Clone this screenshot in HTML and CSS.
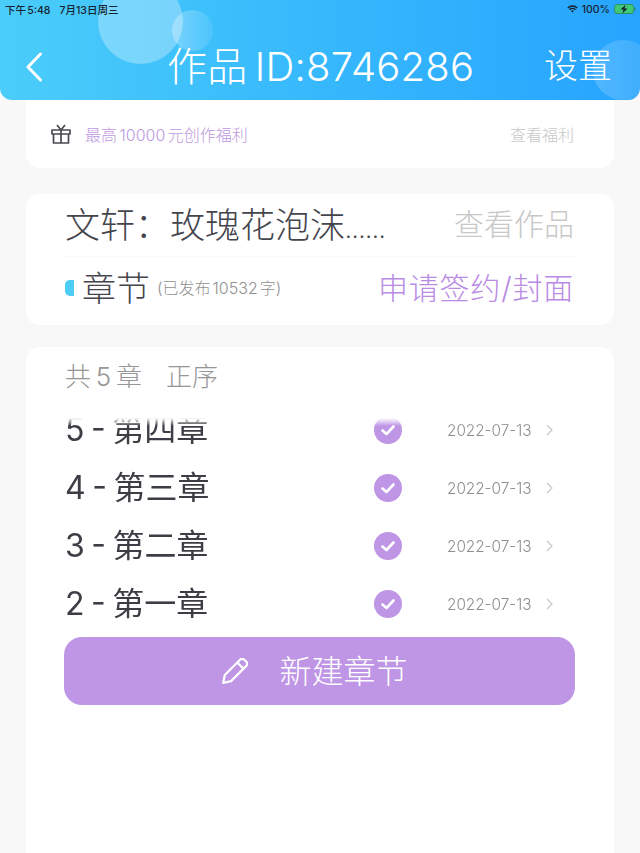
FILE: index.html
```html
<!DOCTYPE html>
<html lang="zh-CN">
  <head>
    <meta charset="UTF-8" />
    <meta name="viewport" content="width=device-width, initial-scale=1.0" />
    <title>作品</title>
    <link rel="stylesheet" href="styles.css">
  </head>
  <body>
    <header class="header">
      <div class="bubble bubble-big"></div>
      <div class="bubble bubble-small"></div>
      <div class="bubble bubble-right"></div>
      <div class="status">
        <div class="status-left"><span>下午 5:48</span><span>7月13日周三</span></div>
        <div class="status-right">
          <svg width="11" height="8" viewBox="0 0 14 10">
            <path d="M1 3.6a8.6 8.6 0 0 1 12 0M3.2 5.8a5.4 5.4 0 0 1 7.6 0" fill="none" stroke="#16222e" stroke-width="1.8"/>
            <path d="M5.2 7.6a2.6 2.6 0 0 1 3.6 0L7 9.6z" fill="#16222e"/>
          </svg>
          <span>100%</span>
          <svg width="22" height="10" viewBox="0 0 22 10">
            <rect x="0.5" y="0.5" width="19" height="9" rx="2.5" fill="#3fc878" stroke="#2f8f6a"/>
            <rect x="20.3" y="3.2" width="1.4" height="3.6" rx="0.7" fill="#2f8f6a"/>
            <path d="M11.5 0.8 6.5 5.6h3l-1 3.6 5-4.8h-3z" fill="#14212b"/>
          </svg>
        </div>
      </div>
      <div class="nav">
        <svg class="back" width="18" height="30" viewBox="0 0 18 30">
          <path d="M14.5 2 2 15l12.5 13" fill="none" stroke="#fff" stroke-width="3" stroke-linecap="round" stroke-linejoin="round"/>
        </svg>
        <div class="nav-title">作品 ID:8746286</div>
        <div class="nav-action">设置</div>
      </div>
    </header>

    <section class="card card-perk">
      <svg class="gift" width="22" height="22" viewBox="0 0 22 22">
        <path d="M2 7h18v4H2zM3.5 11v9h15v-9M11 7v13M7 2l4 5 4-5" fill="none" stroke="#4a4a52" stroke-width="1.7" stroke-linejoin="round"/>
      </svg>
      <span class="perk-text">最高 10000 元创作福利</span>
      <span class="perk-link">查看福利</span>
    </section>

    <section class="card card-work">
      <div class="work-row">
        <span class="work-title">文轩：玫瑰花泡沫<span class="dots">……</span></span>
        <span class="work-link">查看作品</span>
      </div>
      <div class="chapter-row">
        <span class="marker"></span>
        <span class="chapter-label">章节</span>
        <span class="chapter-count">(已发布 10532 字)</span>
        <span class="chapter-action">申请签约/封面</span>
      </div>
    </section>

    <section class="card card-list">
      <div class="list-head"><span class="list-total">共 5 章</span><span>正序</span></div>
      <div class="rows">
        <div class="row row-first">
          <span class="row-name">5 - 第四章</span>
          <svg class="check" width="28" height="28" viewBox="0 0 28 28"><circle cx="14" cy="14" r="14" fill="#bf95e6"/><path d="M8.5 14.5l4 3.5 7-7.5" fill="none" stroke="#fff" stroke-width="2.6" stroke-linecap="round" stroke-linejoin="round"/></svg>
          <span class="row-date">2022-07-13</span>
          <svg class="arrow" width="7" height="12" viewBox="0 0 7 12"><path d="M1 1l5 5-5 5" fill="none" stroke="#c8c8c8" stroke-width="1.2"/></svg>
        </div>
        <div class="row">
          <span class="row-name">4 - 第三章</span>
          <svg class="check" width="28" height="28" viewBox="0 0 28 28"><circle cx="14" cy="14" r="14" fill="#bf95e6"/><path d="M8.5 14.5l4 3.5 7-7.5" fill="none" stroke="#fff" stroke-width="2.6" stroke-linecap="round" stroke-linejoin="round"/></svg>
          <span class="row-date">2022-07-13</span>
          <svg class="arrow" width="7" height="12" viewBox="0 0 7 12"><path d="M1 1l5 5-5 5" fill="none" stroke="#c8c8c8" stroke-width="1.2"/></svg>
        </div>
        <div class="row">
          <span class="row-name">3 - 第二章</span>
          <svg class="check" width="28" height="28" viewBox="0 0 28 28"><circle cx="14" cy="14" r="14" fill="#bf95e6"/><path d="M8.5 14.5l4 3.5 7-7.5" fill="none" stroke="#fff" stroke-width="2.6" stroke-linecap="round" stroke-linejoin="round"/></svg>
          <span class="row-date">2022-07-13</span>
          <svg class="arrow" width="7" height="12" viewBox="0 0 7 12"><path d="M1 1l5 5-5 5" fill="none" stroke="#c8c8c8" stroke-width="1.2"/></svg>
        </div>
        <div class="row">
          <span class="row-name">2 - 第一章</span>
          <svg class="check" width="28" height="28" viewBox="0 0 28 28"><circle cx="14" cy="14" r="14" fill="#bf95e6"/><path d="M8.5 14.5l4 3.5 7-7.5" fill="none" stroke="#fff" stroke-width="2.6" stroke-linecap="round" stroke-linejoin="round"/></svg>
          <span class="row-date">2022-07-13</span>
          <svg class="arrow" width="7" height="12" viewBox="0 0 7 12"><path d="M1 1l5 5-5 5" fill="none" stroke="#c8c8c8" stroke-width="1.2"/></svg>
        </div>
      </div>
      <button class="new-chapter">
        <svg width="26" height="26" viewBox="2 3 23 23">
          <path d="M3 25l1.5-7L18 4.5a2.6 2.6 0 0 1 3.7 0l1.8 1.8a2.6 2.6 0 0 1 0 3.7L10 23.5zM15.5 7l5.5 5.5" fill="none" stroke="#fff" stroke-width="2" stroke-linejoin="round"/>
        </svg>
        <span class="new-label">新建章节</span>
      </button>
    </section>
  </body>
</html>
```

FILE: styles.css
```css
html, body {
  height: 853px;
  overflow: hidden;
}

body {
  margin: 0;
  background-color: #f8f8f8;
  font-family: Inter, "Noto Sans CJK SC", sans-serif;
  font-weight: 400;
  color: #45454d;
  display: flex;
  flex-direction: column;
}

.header {
  position: relative;
  height: 100px;
  flex-shrink: 0;
  overflow: hidden;
  border-radius: 0 0 12px 12px;
  background: linear-gradient(90deg, #4bcdfa 0%, #38bafc 45%, #27a4fe 100%);
  color: #fff;
}

.bubble {
  position: absolute;
  border-radius: 50%;
}

.bubble-big {
  left: 98px;
  top: -21px;
  width: 85px;
  height: 85px;
  background: rgba(255, 255, 255, 0.3);
}

.bubble-small {
  left: 172px;
  top: 10px;
  width: 41px;
  height: 41px;
  background: linear-gradient(90deg, rgba(255, 255, 255, 0.3), rgba(255, 255, 255, 0.08));
}

.bubble-right {
  left: 593px;
  top: 40px;
  width: 60px;
  height: 60px;
  background: linear-gradient(90deg, rgba(255, 255, 255, 0.18), rgba(255, 255, 255, 0.1));
}

.status {
  position: relative;
  height: 16px;
  padding-top: 1px;
  display: flex;
  justify-content: space-between;
  align-items: center;
  padding-left: 5px;
  padding-right: 4px;
  font-size: 10.5px;
  font-weight: 500;
  color: #16222e;
}

.status-left {
  display: flex;
  gap: 9px;
  word-spacing: -1.5px;
}

.status-right {
  display: flex;
  align-items: center;
  gap: 4px;
}

.nav {
  position: relative;
  height: 67px;
  padding: 16px 28px 0 26px;
  display: flex;
  align-items: center;
}

.nav-title {
  margin-left: 123px;
  margin-bottom: 6px;
  font-size: 40px;
  font-weight: 300;
  word-spacing: -4px;
  letter-spacing: 0.2px;
  white-space: nowrap;
}

.nav-action {
  margin-left: auto;
  margin-bottom: 6px;
  font-size: 34px;
  font-weight: 300;
  white-space: nowrap;
}

.card {
  margin: 0 26px;
  background-color: #fff;
  border-radius: 14px;
}

.card-perk {
  height: 68px;
  border-radius: 0 0 14px 14px;
  display: flex;
  align-items: center;
  padding-left: 24px;
  padding-right: 40px;
  flex-shrink: 0;
}

.gift {
  margin-right: 13px;
}

.perk-text {
  font-size: 16px;
  font-weight: 300;
  word-spacing: -2px;
  color: #bd98e0;
}

.perk-link {
  margin-left: auto;
  font-size: 16px;
  font-weight: 300;
  color: #c8c8c8;
}

.card-work {
  margin-top: 26px;
  height: 131px;
  flex-shrink: 0;
  padding: 0 40px 0 39px;
  box-sizing: border-box;
}

.work-row {
  height: 62px;
  display: flex;
  align-items: center;
  justify-content: space-between;
  border-bottom: 1px solid #f9f9f9;
}

.work-title {
  margin-bottom: 6px;
  font-size: 35px;
  font-weight: 300;
  white-space: nowrap;
}

.dots {
  font-size: 24px;
}

.work-link {
  margin-bottom: 6px;
  font-size: 30px;
  font-weight: 300;
  color: #c8c8c8;
  white-space: nowrap;
}

.chapter-row {
  height: 62px;
  display: flex;
  align-items: center;
}

.marker {
  width: 9px;
  height: 16px;
  margin-right: 8px;
  border-radius: 5px 0 0 5px;
  background-color: #4ccdf5;
}

.chapter-label {
  margin-bottom: 4px;
  font-size: 34px;
  font-weight: 300;
  white-space: nowrap;
}

.chapter-count {
  margin-left: 7px;
  margin-bottom: 3px;
  font-size: 16px;
  font-weight: 300;
  word-spacing: -2.5px;
  color: #909090;
  white-space: nowrap;
}

.chapter-action {
  margin-left: auto;
  margin-bottom: 4px;
  font-size: 30px;
  font-weight: 300;
  letter-spacing: 0.8px;
  color: #b98ce4;
  white-space: nowrap;
}

.card-list {
  margin-top: 22px;
  flex: 1;
  padding: 0 39px 0 38px;
  border-radius: 14px 14px 0 0;
}

.list-head {
  height: 60px;
  padding-left: 1px;
  padding-bottom: 6px;
  box-sizing: border-box;
  display: flex;
  gap: 24px;
  align-items: center;
  font-size: 26px;
  font-weight: 300;
  color: #969696;
}

.list-total {
  word-spacing: -2.5px;
}

.rows {
  height: 219px;
  margin-top: 11px;
  overflow: hidden;
  -webkit-mask-image: linear-gradient(#0000 0, #000 8px);
  mask-image: linear-gradient(#0000 0, #000 8px);
}

.row {
  height: 58px;
  padding-left: 1px;
  display: flex;
  align-items: center;
}

.row-first {
  margin-top: -17px;
}

.row-name {
  width: 309px;
  flex-shrink: 0;
  margin-bottom: 6px;
  font-size: 32px;
  font-weight: 400;
  word-spacing: -2.5px;
  white-space: nowrap;
  color: #3d3d45;
}

.row-date {
  margin-left: 45px;
  font-size: 15.3px;
  font-weight: 300;
  color: #8e8e8e;
  white-space: nowrap;
}

.arrow {
  margin-left: 15px;
}

.new-chapter {
  width: 511px;
  height: 68px;
  margin-top: 0;
  padding: 0 9px 0 0;
  display: flex;
  align-items: center;
  justify-content: center;
  gap: 31px;
  border: none;
  border-radius: 18px;
  background-color: #bf95e6;
  color: #fff;
  font-family: inherit;
  font-weight: 300;
  font-size: 32px;
}

.new-label {
  margin-bottom: 4px;
}
```
